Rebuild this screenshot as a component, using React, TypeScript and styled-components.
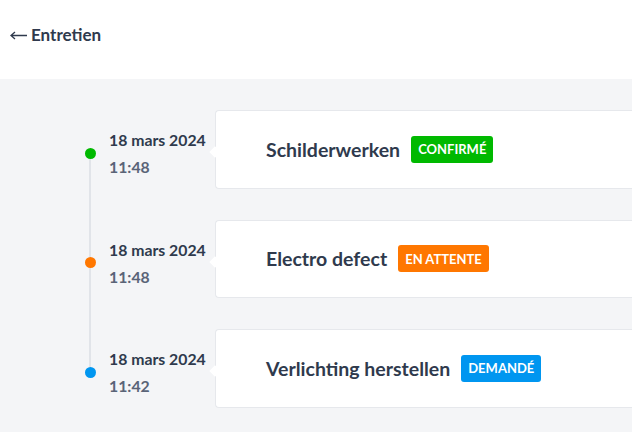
import React from "react";
import styled, { createGlobalStyle } from "styled-components";

const Global = createGlobalStyle`
  html, body { margin: 0; padding: 0; background: #f4f5f7; overflow: hidden; }
  body { font-family: Lato, "Noto Sans", sans-serif; color: #2f3a4d; }
`;

const Header = styled.header`
  height: 79px;
  background: #ffffff;
  display: flex;
  align-items: center;
  padding: 0 10px;
  box-sizing: border-box;
`;

const Back = styled.a`
  font-size: 17px;
  font-weight: 700;
  color: #2f3a4d;
  text-decoration: none;
  display: flex;
  align-items: center;
  gap: 4px;
  margin-top: -10px;
`;

const ArrowIcon = styled.svg`
  width: 17px;
  height: 9px;
  margin-top: 1px;
`;

const Timeline = styled.div`
  position: relative;
  display: flex;
  flex-direction: column;
  gap: 31px;
  padding: 31px 0 0 80px;
  &::before {
    content: "";
    position: absolute;
    left: 89px;
    top: 74px;
    height: 219px;
    width: 2px;
    background: #e1e4e9;
  }
`;

const Row = styled.div`
  display: flex;
  align-items: center;
`;

const Stamp = styled.div`
  display: flex;
  align-items: center;
  margin-top: 8px;
  width: 135px;
  flex-shrink: 0;
`;

const Rail = styled.div`
  width: 20px;
  display: flex;
  justify-content: center;
  position: relative;
  z-index: 1;
`;

const Dot = styled.span<{ $color: string }>`
  width: 11px;
  height: 11px;
  border-radius: 50%;
  background: ${(p) => p.$color};
`;

const When = styled.div`
  margin-left: 9px;
  display: flex;
  flex-direction: column;
  gap: 8px;
`;

const DateText = styled.div`
  font-size: 15.8px;
  font-weight: 700;
  color: #2f3a4d;
  white-space: nowrap;
`;

const Time = styled.div`
  font-size: 15.8px;
  font-weight: 700;
  color: #5a6478;
`;

const Card = styled.div`
  position: relative;
  flex: 1;
  height: 78.5px;
  box-sizing: border-box;
  background: #ffffff;
  border: 1px solid #e6e8ec;
  border-right: none;
  border-radius: 4px 0 0 4px;
  display: flex;
  align-items: center;
  padding-left: 50px;
  gap: 11px;
  &::before {
    content: "";
    position: absolute;
    left: -5px;
    top: 37px;
    width: 8px;
    height: 8px;
    background: #ffffff;
    transform: rotate(45deg);
  }
`;

const Title = styled.div`
  font-size: 19.5px;
  font-weight: 700;
  color: #2f3a4d;
  white-space: nowrap;
`;

const Badge = styled.span<{ $color: string }>`
  background: ${(p) => p.$color};
  color: #ffffff;
  font-size: 13px;
  font-weight: 700;
  text-transform: uppercase;
  height: 27px;
  padding: 0 7px;
  border-radius: 3px;
  display: inline-flex;
  align-items: center;
  white-space: nowrap;
`;

const items = [
  { date: "18 mars 2024", time: "11:48", title: "Schilderwerken", status: "Confirmé", color: "#00b900" },
  { date: "18 mars 2024", time: "11:48", title: "Electro defect", status: "En attente", color: "#ff7700" },
  { date: "18 mars 2024", time: "11:42", title: "Verlichting herstellen", status: "Demandé", color: "#0096f0" },
];

export default function App() {
  return (
    <>
      <Global />
      <Header>
        <Back href="#">
          <ArrowIcon viewBox="0 0 17 9" fill="none" stroke="#2f3a4d" strokeWidth="1.3">
            <path d="M1 4.5H17M5 1L1 4.5L5 8" />
          </ArrowIcon>
          Entretien
        </Back>
      </Header>
      <Timeline>
        {items.map((it, i) => (
          <Row key={i}>
            <Stamp>
              <Rail>
                <Dot $color={it.color} />
              </Rail>
              <When>
                <DateText>{it.date}</DateText>
                <Time>{it.time}</Time>
              </When>
            </Stamp>
            <Card>
              <Title>{it.title}</Title>
              <Badge $color={it.color}>{it.status}</Badge>
            </Card>
          </Row>
        ))}
      </Timeline>
    </>
  );
}
